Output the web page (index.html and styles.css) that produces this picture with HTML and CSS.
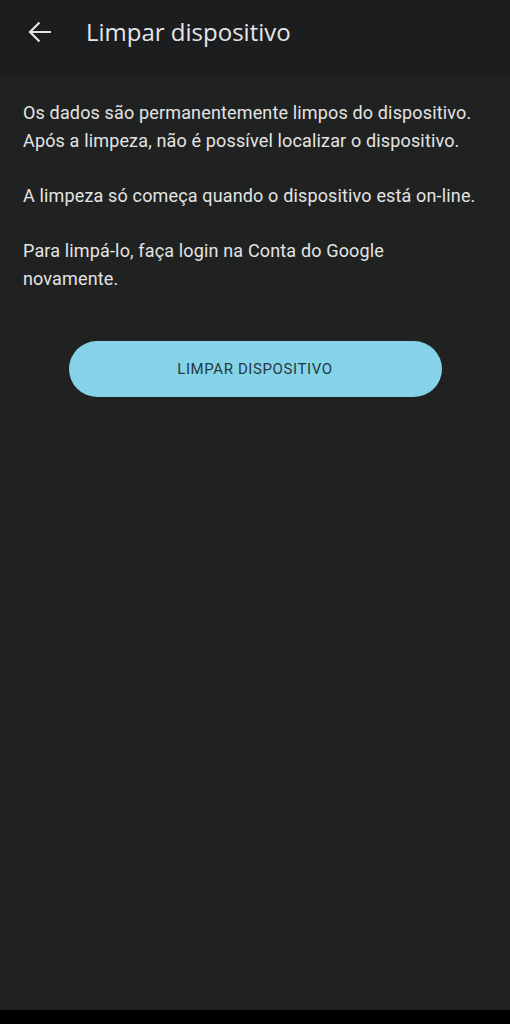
FILE: index.html
```html
<!DOCTYPE html>
<html lang="pt-BR">
<head>
    <meta charset="UTF-8">
    <meta name="viewport" content="width=device-width, initial-scale=1.0">
    <title>Limpar dispositivo</title>
    <link rel="stylesheet" href="styles.css">
</head>
<body>
    <div class="screen">
        <header class="topbar">
            <span class="back">
                <svg width="26" height="24" viewBox="0 0 26 24">
                    <path d="M24 12H3M12.5 2.5L3 12l9.5 9.5" fill="none" stroke="#e3e3e3" stroke-width="2.2"/>
                </svg>
            </span>
            <h1 class="title">Limpar dispositivo</h1>
        </header>

        <main class="content">
            <p>Os dados são permanentemente limpos do dispositivo. Após a limpeza, não é possível localizar o dispositivo.</p>
            <p>A limpeza só começa quando o dispositivo está on-line.</p>
            <p>Para limpá-lo, faça login na Conta do Google novamente.</p>

            <div class="actions">
                <button class="wipe">LIMPAR DISPOSITIVO</button>
            </div>
        </main>
    </div>
    <div class="navbar"></div>
</body>
</html>
```

FILE: styles.css
```css
html, body {
    margin: 0;
    padding: 0;
    height: 100%;
}
body {
    background: #000;
    font-family: Roboto, "Noto Sans", sans-serif;
    display: flex;
    flex-direction: column;
}
.screen {
    height: 1010px;
    background: #202221;
    display: flex;
    flex-direction: column;
}
.topbar {
    height: 77px;
    background: #1b1d1e;
    display: flex;
    align-items: flex-start;
    padding-top: 20px;
    box-sizing: border-box;
}
.back {
    width: 26px;
    height: 24px;
    margin-left: 27px;
    display: flex;
}
.title {
    margin: 0 0 0 33px;
    font-family: "Open Sans", Roboto, sans-serif;
    font-weight: 400;
    font-size: 24px;
    line-height: 24px;
    color: #e6e6e6;
}
.content {
    padding: 22px 30px 0 23px;
    color: #e4e4e4;
}
.content p {
    margin: 0 0 27px 0;
    font-size: 18px;
    line-height: 28px;
    letter-spacing: 0.15px;
}
.content p:last-of-type {
    margin-bottom: 0;
}
.actions {
    display: flex;
    justify-content: center;
    margin-top: 48px;
    margin-right: -7px;
}
.wipe {
    width: 373px;
    height: 56px;
    border: none;
    border-radius: 28px;
    background: #84d3e8;
    color: #26393e;
    font-family: Roboto, sans-serif;
    font-size: 15px;
    font-weight: 400;
    letter-spacing: 0.6px;
    cursor: pointer;
}
.navbar {
    flex: 1;
    background: #000;
}
```
